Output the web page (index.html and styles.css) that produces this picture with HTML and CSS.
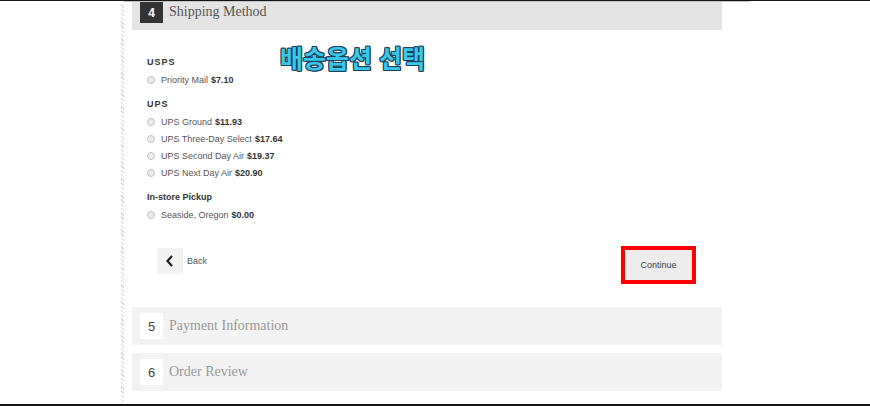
FILE: index.html
```html
<!DOCTYPE html>
<html lang="ko">
<head>
    <meta charset="UTF-8">
    <meta name="viewport" content="width=device-width, initial-scale=1.0">
    <title>Checkout - Shipping Method</title>
    <link rel="stylesheet" href="styles.css">
</head>
<body>

<div class="page">
    <div class="rail"></div>
    <div class="column">

        <!-- 4. Shipping Method (open) -->
        <div class="step step-open">
            <div class="step-head">
                <span class="step-num">4</span>
                <span class="step-title">Shipping Method</span>
            </div>
            <div class="step-body">
                <div class="group">
                    <div class="group-name spaced">USPS</div>
                    <label class="option"><span class="radio"></span>Priority Mail <b>$7.10</b></label>
                </div>
                <div class="group">
                    <div class="group-name spaced">UPS</div>
                    <label class="option"><span class="radio"></span>UPS Ground <b>$11.93</b></label>
                    <label class="option"><span class="radio"></span>UPS Three-Day Select <b>$17.64</b></label>
                    <label class="option"><span class="radio"></span>UPS Second Day Air <b>$19.37</b></label>
                    <label class="option"><span class="radio"></span>UPS Next Day Air <b>$20.90</b></label>
                </div>
                <div class="group">
                    <div class="group-name">In-store Pickup</div>
                    <label class="option"><span class="radio"></span>Seaside, Oregon <b>$0.00</b></label>
                </div>

                <div class="actions">
                    <a class="back" href="#">
                        <span class="back-icon">
                            <svg width="8" height="12" viewBox="0 0 8 12"><path d="M6 1 L1.5 6 L6 11" fill="none" stroke="#222" stroke-width="2.2"/></svg>
                        </span>
                        Back
                    </a>
                    <button class="continue">Continue</button>
                </div>
            </div>
        </div>

        <!-- 5. Payment Information -->
        <div class="step">
            <div class="step-head">
                <span class="step-num">5</span>
                <span class="step-title">Payment Information</span>
            </div>
        </div>

        <!-- 6. Order Review -->
        <div class="step">
            <div class="step-head">
                <span class="step-num">6</span>
                <span class="step-title">Order Review</span>
            </div>
        </div>

    </div>

    <!-- 안내 문구 -->
    <div class="note">배송옵션 선택</div>
</div>

</body>
</html>
```

FILE: styles.css
```css
body {
    margin: 0;
    font-family: "Liberation Sans", Arial, sans-serif;
    background: #fff;
    overflow: hidden;
}
.page {
    position: relative;
    display: flex;
    height: 406px;
    box-sizing: border-box;
    border-top: 1px solid #151515;
    border-bottom: 2px solid #151515;
}
.rail {
    width: 3px;
    margin-left: 121px;
    margin-top: 1px;
    background: repeating-linear-gradient(45deg, #d6d6d6 0 1px, #fff 1px 3px);
}
.column {
    width: 626px;
    border-top: 1px solid #c4c4c4;
    padding-left: 8px;
    box-sizing: border-box;
}
.step {
    width: 590px;
    margin-bottom: 8px;
}
.step-head {
    display: flex;
    align-items: center;
    height: 38px;
    padding-left: 8px;
    background: #f3f3f3;
}
.step-num {
    width: 23px;
    height: 26px;
    display: flex;
    align-items: center;
    justify-content: center;
    background: #fff;
    color: #444;
    font-size: 13px;
}
.step-title {
    margin-left: 6px;
    font-family: "Liberation Serif", "DejaVu Serif", serif;
    font-size: 14px;
    color: #999;
}
.step-open {
    margin-bottom: 7px;
}
.step-open .step-head {
    height: 28px;
    align-items: flex-start;
    background: #e4e4e4;
}
.step-open .step-num {
    height: 21px;
    background: #333;
    color: #fff;
    font-weight: bold;
    font-size: 12px;
}
.step-open .step-title {
    color: #555;
    line-height: 19px;
}
.step-body {
    padding: 26px 29px 0 15px;
    height: 270px;
    box-sizing: border-box;
}
.group {
    margin-bottom: 10px;
}
.group-name {
    font-size: 9px;
    font-weight: bold;
    line-height: 12px;
    color: #333;
    margin-bottom: 3px;
}
.spaced {
    letter-spacing: 1px;
}
.option {
    display: flex;
    align-items: center;
    height: 17px;
    font-size: 9px;
    color: #555;
}
.option b {
    margin-left: 3px;
    color: #333;
}
.radio {
    width: 6px;
    height: 6px;
    border: 1px solid #c2c2c2;
    border-radius: 50%;
    background: #ececec;
    margin-right: 6px;
}
.actions {
    display: flex;
    justify-content: space-between;
    align-items: flex-start;
    margin-top: 25px;
    padding-left: 10px;
}
.back {
    display: flex;
    align-items: center;
    font-size: 9px;
    color: #555;
    text-decoration: none;
}
.back-icon {
    width: 26px;
    height: 26px;
    display: flex;
    align-items: center;
    justify-content: center;
    background: #f3f3f3;
    margin-right: 4px;
}
.continue {
    width: 67px;
    height: 30px;
    margin-top: 2px;
    margin-right: 1px;
    border: none;
    background: #ececec;
    font-family: "Liberation Sans", Arial, sans-serif;
    font-size: 9px;
    color: #444;
    outline: 4px solid #f00;
    outline-offset: 0;
}
.note {
    position: absolute;
    left: 280px;
    top: 41px;
    font-family: "Noto Sans CJK KR", sans-serif;
    font-weight: bold;
    font-size: 25px;
    line-height: 1.2;
    color: #38c8ea;
    text-shadow: -1px -1px 0 #1e3e5c, 1px -1px 0 #1e3e5c, -1px 1px 0 #1e3e5c, 1px 1px 0 #1e3e5c, 1px 0 0 #1e3e5c, -1px 0 0 #1e3e5c, 0 1px 0 #1e3e5c, 0 -1px 0 #1e3e5c;
}
```
